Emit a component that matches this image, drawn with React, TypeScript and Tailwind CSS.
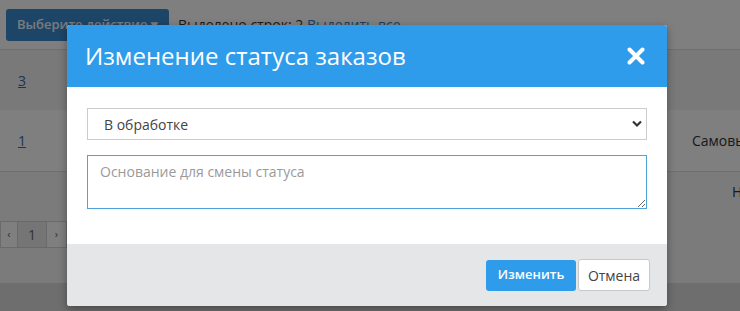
import React from 'react';

const rows = [
  { id: '3', bg: 'bg-[#f3f3f3]', h: 'h-[60px]', right: '' },
  { id: '1', bg: 'bg-white', h: 'h-[61px]', right: 'Самовывоз' },
];

const App: React.FC = () => {
  return (
    <div className="relative h-[311px] w-[740px] overflow-hidden bg-[#dcdcdc] font-['Open_Sans',sans-serif] text-[14px] text-[#333]">
      {/* page behind the modal */}
      <div className="flex h-[50px] items-center gap-[9px] border-b border-[#dedede] bg-white px-[6px]">
        <button className="h-[32px] rounded-[3px] bg-[#3a8bd0] px-[11px] text-[13px] font-semibold text-[#eef6ff]">
          Выберите действие ▾
        </button>
        <span>
          Выделено строк: 2 <span className="text-[#2d7fc4]">Выделить все</span>
        </span>
      </div>
      {rows.map((r) => (
        <div key={r.id} className={`flex items-center ${r.bg} ${r.h}`}>
          <div className="w-[692px] shrink-0 pl-[18px]">
            <a className="text-[#2f6ea8] underline">{r.id}</a>
          </div>
          <span className="shrink-0 whitespace-nowrap">{r.right}</span>
        </div>
      ))}
      <div className="border-t border-[#dedede] bg-[#f7f7f7]">
        <div className="flex h-[39px] items-center">
          <div className="w-[732px] shrink-0" />
          <span className="shrink-0 whitespace-nowrap">Нет</span>
        </div>
        <div className="flex h-[72px] items-start pt-[10px]">
          <div className="flex h-[27px] border border-[#d5d5d5] bg-white text-[#666]">
            <span className="flex w-[17px] items-center justify-center border-r border-[#d5d5d5] text-[11px]">‹</span>
            <span className="flex w-[29px] items-center justify-center border-r border-[#d5d5d5] bg-[#eaeaea]">1</span>
            <span className="flex w-[20px] items-center justify-center border-r border-[#d5d5d5] text-[11px]">›</span>
            <span className="flex w-[40px] items-center justify-center"></span>
          </div>
        </div>
      </div>

      {/* overlay */}
      <div className="absolute inset-0 bg-black/50" />

      {/* modal */}
      <div className="absolute left-[67px] top-[25px] w-[600px] overflow-hidden rounded-[3px] bg-white shadow-[0_3px_8px_rgba(0,0,0,0.35)]">
        <div className="flex h-[62px] items-center justify-between bg-[#2e9ceb] pl-[18px] pr-[22px]">
          <h3 className="text-[24px] leading-[32px] text-white">Изменение статуса заказов</h3>
          <svg width="18" height="18" viewBox="0 0 18 18" className="text-white">
            <path d="M2.5 2.5 L15.5 15.5 M15.5 2.5 L2.5 15.5" stroke="currentColor" strokeWidth="4" strokeLinecap="round" />
          </svg>
        </div>
        <div className="px-[20px] pb-[35px] pt-[21px]">
          <div className="relative">
            <select className="h-[32px] w-full appearance-none border border-[#cccccc] bg-white pl-[16px] text-[14px] text-[#444] outline-none">
              <option>В обработке</option>
            </select>
            <svg width="10" height="8" viewBox="0 0 10 8" className="pointer-events-none absolute right-[5px] top-[12px]">
              <path d="M1 1.5 L5 5.5 L9 1.5" fill="none" stroke="#333" strokeWidth="2.2" />
            </svg>
          </div>
          <textarea
            className="mt-[15px] block h-[54px] w-full border border-[#4fa3dc] px-[12px] py-[6px] text-[14px] leading-[20px] text-[#444] outline-none placeholder:text-[#9a9a9a]"
            placeholder="Основание для смены статуса"
          />
        </div>
        <div className="flex h-[62px] items-center justify-end gap-[2px] bg-[#e5e6e8] pr-[17px]">
          <button className="h-[31px] w-[90px] rounded-[3px] bg-[#2e9ceb] text-[13px] font-semibold text-white">
            Изменить
          </button>
          <button className="h-[32px] w-[72px] rounded-[3px] border border-[#c8c8c8] bg-white text-[14px] text-[#444]">
            Отмена
          </button>
        </div>
      </div>
    </div>
  );
};

export default App;
